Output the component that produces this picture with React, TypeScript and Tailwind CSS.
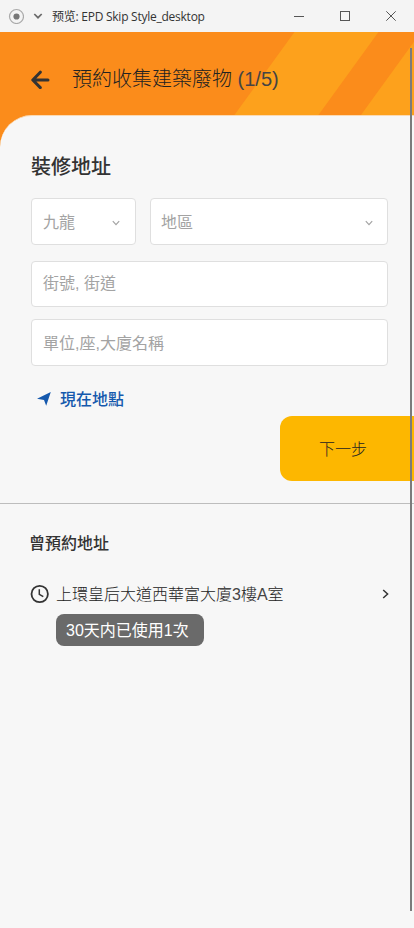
import type { ReactNode } from "react";

const sans = "font-['Liberation_Sans','Noto_Sans_CJK_TC',sans-serif]";

function WindowBar() {
  return (
    <div className="flex h-8 items-center bg-[#f4f4f4]">
      <svg className="ml-2 h-4 w-4 shrink-0" viewBox="0 0 16 16">
        <circle cx="8.5" cy="8.5" r="7" fill="none" stroke="#aaa" strokeWidth="1.2" />
        <circle cx="8.5" cy="8.5" r="3.1" fill="#777" />
      </svg>
      <svg className="ml-[9px] h-3 w-3 shrink-0" viewBox="0 0 12 12" fill="none">
        <path d="M1.3 4L5 7.7L8.7 4" stroke="#6a6a6a" strokeWidth="1.7" />
      </svg>
      <span className="ml-[7px] whitespace-nowrap pt-px text-[12px] leading-4 tracking-[-0.25px] text-[#333] font-['Open_Sans','Noto_Sans_CJK_SC',sans-serif]">
        预览: EPD Skip Style_desktop
      </span>
      <svg className="ml-auto h-8 w-[138px] shrink-0" viewBox="0 0 138 32" fill="none" stroke="#555">
        <path d="M18 16.5H28" />
        <rect x="64.5" y="11.5" width="9" height="9" />
        <path d="M110.3 11.3L119.7 20.7M119.7 11.3L110.3 20.7" />
      </svg>
    </div>
  );
}

function Chevron({ className }: { className: string }) {
  return (
    <svg className={`h-2 w-2 ${className}`} viewBox="0 0 8 8" fill="none">
      <path d="M0.8 2.2L4 5.6L7.2 2.2" stroke="#a3a3a3" strokeWidth="1.2" />
    </svg>
  );
}

function Field({ className, children }: { className: string; children: ReactNode }) {
  return (
    <div className={`flex items-center rounded-[4px] border border-[#dfdfdf] bg-white pl-[11px] text-[16px] text-[#a3a3a3] ${className}`}>
      {children}
    </div>
  );
}

export default function App() {
  return (
    <div className={`relative h-[928px] w-[414px] overflow-hidden bg-[#f7f7f7] text-[#333] ${sans}`}>
      <WindowBar />

      {/* Header with diagonal stripes */}
      <header className="relative flex h-[115px] items-start bg-[#fb8c1b]">
        <svg className="absolute inset-0 h-[115px] w-[414px]" viewBox="0 0 414 115">
          <path d="M294.5 0H378.5L295.3 115H211.3Z" fill="#fda11c" />
          <path d="M421 0H505V115H337.8Z" fill="#fda11c" />
        </svg>
        <div className="relative flex h-[94px] items-center pl-[31px]">
          <svg className="h-5 w-[19px]" viewBox="0 0 19 20" fill="none" stroke="#333" strokeWidth="3" strokeLinecap="round" strokeLinejoin="round">
            <path d="M17 11H2.2M9.3 3.2L1.8 11L9.3 18.6" />
          </svg>
          <h1 className="ml-[22px] whitespace-nowrap text-[20px] font-light leading-6 text-[#222]">
            預約收集建築廢物 <span className="text-[#444]">(1/5)</span>
          </h1>
        </div>
      </header>

      <main className="relative -mt-8 rounded-tl-[32px] border-t border-[#fbdab3] bg-[#f7f7f7] pt-9">
        <section className="pl-[31px] pr-[26px]">
          <h2 className="h-[30px] text-[20px] font-medium leading-[30px]">裝修地址</h2>
          <div className="mt-4 flex gap-[14px]">
            <Field className="h-[47px] w-[105px] pt-[2px]">
              九龍
              <Chevron className="ml-auto mr-[15px]" />
            </Field>
            <Field className="h-[47px] flex-1 pt-[2px]">
              <span className="-ml-px">地區</span>
              <Chevron className="ml-auto mr-[14px]" />
            </Field>
          </div>
          <Field className="mt-4 h-[46px]">街號, 街道</Field>
          <Field className="mt-3 h-[47px] pt-[2px]">單位,座,大廈名稱</Field>
          <div className="mt-[22px] flex h-6 items-center pl-[6px] text-[#1559ad]">
            <svg className="-mt-[2px] h-[14px] w-[14px]" viewBox="0 0 14 14" fill="currentColor">
              <path d="M13.8 0L9.2 13.8L7 8L0 6.7Z" />
            </svg>
            <span className="ml-[9px] text-[16px] font-medium leading-6">現在地點</span>
          </div>
        </section>

        <div className="mt-1 flex justify-end">
          <button className="h-[65px] w-[134px] rounded-l-[12px] bg-[#fdb700] pr-2 pt-[2px] text-[16px] font-light text-[#222]">下一步</button>
        </div>

        <div className="mt-[22px] h-px bg-[#bdbdbd]" />

        {/* Previously booked addresses */}
        <section className="pl-[29px] pr-[24px] pt-[28px]">
          <h3 className="text-[16px] font-medium leading-6">曾預約地址</h3>
          <div className="mt-[27px] flex h-6 items-center">
            <svg className="-mt-[2px] ml-[1px] h-5 w-5" viewBox="0 0 20 20" fill="none" stroke="#333">
              <circle cx="9.7" cy="10" r="8.2" strokeWidth="1.8" />
              <path d="M9.3 5.2V10.3L13.3 12.7" strokeWidth="1.5" />
            </svg>
            <span className="ml-[6px] whitespace-nowrap text-[16px] font-light leading-6 text-[#222]">
              上環皇后大道西華富大廈<span className="text-[#444]">3</span>樓<span className="text-[#444]">A</span>室
            </span>
            <svg className="-mt-[2px] ml-auto h-[10px] w-[8px]" viewBox="0 0 8 10" fill="none">
              <path d="M1.2 1L5.6 5L1.2 9" stroke="#333" strokeWidth="1.5" />
            </svg>
          </div>
          <div className="ml-[27px] mt-[7px] flex h-8 w-[148px] items-center rounded-[8px] bg-[#6a6a6a] pl-[10px] pt-[2px] text-[16px] text-white">
            30天内已使用1次
          </div>
        </section>
      </main>

      {/* Scrollbar thumb */}
      <div className="absolute left-[410px] top-[48px] h-[863px] w-[2px] bg-[#7b7b7b]" />
    </div>
  );
}
